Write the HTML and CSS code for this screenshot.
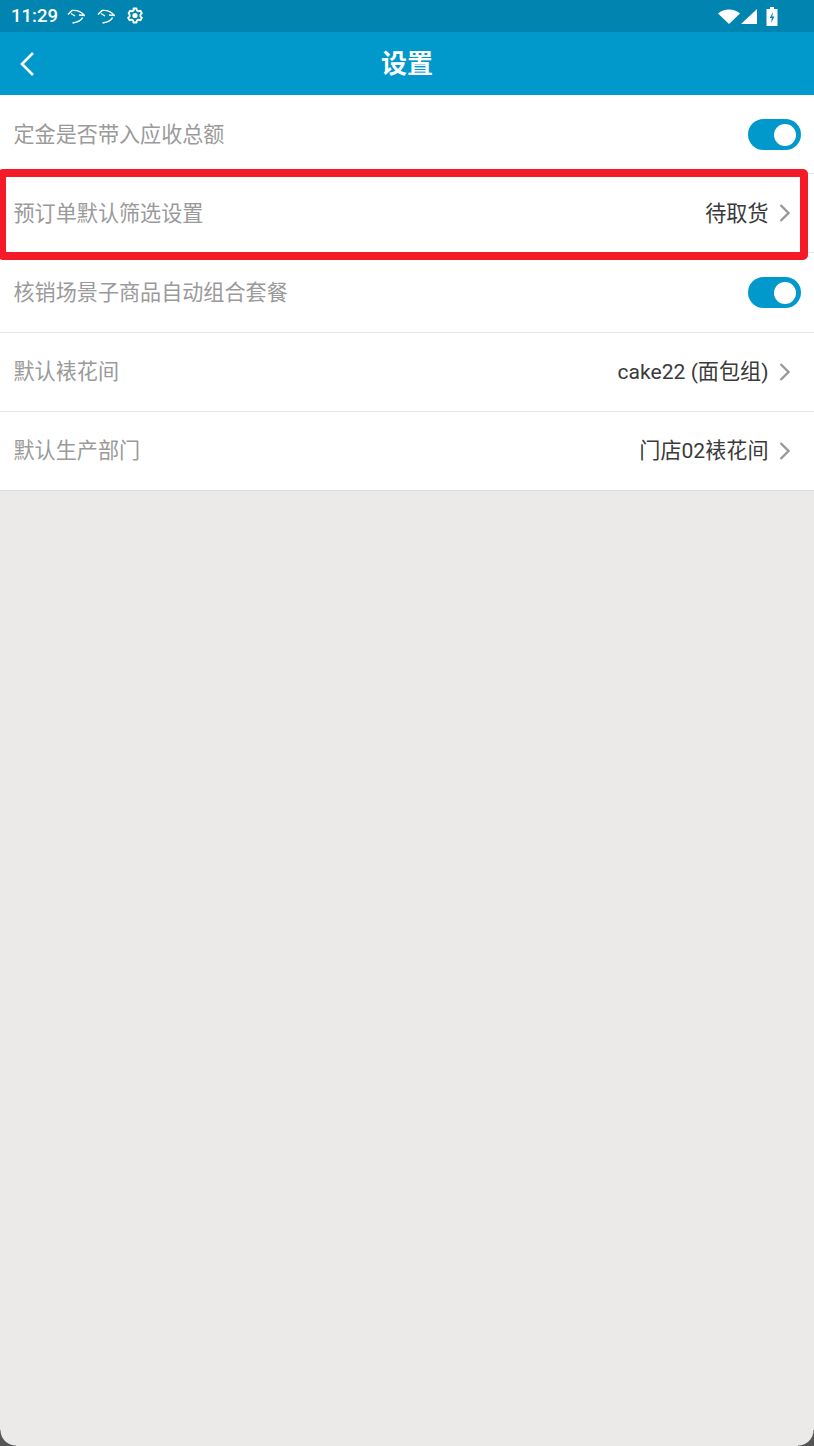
FILE: index.html
```html
<!DOCTYPE html>
<html lang="zh-CN">
<head>
    <meta charset="UTF-8">
    <meta name="viewport" content="width=device-width, initial-scale=1.0">
    <title>设置</title>
    <link rel="stylesheet" href="styles.css">
</head>
<body>

<div class="screen">
    <div class="status-bar">
        <span class="clock">11:29</span>
        <svg class="hook" width="18" height="15" viewBox="0 0 18 15"><path d="M1 5.500 5 1.500C9 1 14 2.500 17.500 6.500L12 6M4 4.500 8 7M15.500 8.500C14.500 11.500 11 13 5.500 14" fill="none" stroke="#fff" stroke-width="1.400"/></svg>
        <svg class="hook" width="18" height="15" viewBox="0 0 18 15"><path d="M1 5.500 5 1.500C9 1 14 2.500 17.500 6.500L12 6M4 4.500 8 7M15.500 8.500C14.500 11.500 11 13 5.500 14" fill="none" stroke="#fff" stroke-width="1.400"/></svg>
        <svg class="gear" width="18" height="18" viewBox="0 0 18 18"><path d="M7.500 1.500h3l.4 2 1.600.9 1.900-.7 1.500 2.600-1.500 1.300v1.800l1.500 1.300-1.500 2.600-1.900-.7-1.600.9-.4 2h-3l-.4-2-1.600-.9-1.900.7-1.500-2.600 1.500-1.300V7.600L2.600 6.300l1.500-2.600 1.900.7 1.600-.9z" fill="none" stroke="#fff" stroke-width="1.800" stroke-linejoin="round"/><circle cx="9" cy="8.500" r="2.600" fill="#fff"/></svg>
        <span class="status-right">
            <svg class="wifi" width="22" height="15" viewBox="0 0 22 15"><path d="M0 4.500C6-1 16-1 22 4.500L11 15z" fill="#fff"/></svg>
            <svg class="signal" width="16" height="15" viewBox="0 0 16 15"><path d="M16 0V15H0z" fill="#fff"/></svg>
            <svg width="12" height="19" viewBox="0 0 12 19"><path d="M4 0h4v2h3.500v17H.5V2H4z" fill="#fff"/><path d="M7 5 3.800 11h2l-.6 5 3.200-6.500H6.200z" fill="#0284b0"/></svg>
        </span>
    </div>

    <div class="nav-bar">
        <svg class="back" width="16" height="26" viewBox="0 0 16 26"><path d="M14 2 3 13l11 11" fill="none" stroke="#fff" stroke-width="2.600"/></svg>
        <h1>设置</h1>
    </div>

    <div class="list">
        <div class="row">
            <span class="label">定金是否带入应收总额</span>
            <span class="switch"></span>
        </div>
        <div class="row">
            <span class="label">预订单默认筛选设置</span>
            <span class="value">待取货</span>
            <svg class="arrow" width="14" height="20" viewBox="0 0 14 20"><path d="M2.500 2l8 8-8 8" fill="none" stroke="#999" stroke-width="2.400"/></svg>
        </div>
        <div class="row">
            <span class="label">核销场景子商品自动组合套餐</span>
            <span class="switch"></span>
        </div>
        <div class="row">
            <span class="label">默认裱花间</span>
            <span class="value">cake22 (面包组)</span>
            <svg class="arrow" width="14" height="20" viewBox="0 0 14 20"><path d="M2.500 2l8 8-8 8" fill="none" stroke="#999" stroke-width="2.400"/></svg>
        </div>
        <div class="row">
            <span class="label">默认生产部门</span>
            <span class="value">门店02裱花间</span>
            <svg class="arrow" width="14" height="20" viewBox="0 0 14 20"><path d="M2.500 2l8 8-8 8" fill="none" stroke="#999" stroke-width="2.400"/></svg>
        </div>
    </div>

    <div class="highlight"></div>
    <div class="corner corner-left"></div>
    <div class="corner corner-right"></div>
</div>

</body>
</html>
```

FILE: styles.css
```css
html, body {
    margin: 0;
    padding: 0;
}
body {
    font-family: Roboto, "Noto Sans CJK SC", sans-serif;
    background-color: #eaeaea;
}
.screen {
    position: relative;
    width: 814px;
    height: 1446px;
    overflow: hidden;
    background-color: #ebeae9;
}
.status-bar {
    display: flex;
    align-items: center;
    height: 32px;
    padding: 0 11px;
    box-sizing: border-box;
    background-color: #0284b0;
    color: #fff;
}
.clock {
    font-size: 18.500px;
    font-weight: 500;
    margin-right: 9px;
}
.hook {
    margin-right: 12px;
}
.hook + .gear {
    margin-left: -1px;
}
.status-right {
    display: flex;
    align-items: center;
    margin-left: auto;
    margin-right: 25px;
}
.wifi {
    margin-right: 1px;
}
.signal {
    margin-right: 9px;
}
.nav-bar {
    position: relative;
    display: flex;
    align-items: center;
    justify-content: center;
    height: 63px;
    padding-bottom: 4px;
    box-sizing: border-box;
    background-color: #0199cc;
}
.nav-bar h1 {
    margin: 0;
    font-size: 26px;
    font-weight: 700;
    color: #fff;
}
.back {
    position: absolute;
    left: 19px;
    top: 19px;
}
.list {
    background-color: #fff;
}
.row {
    display: flex;
    align-items: center;
    height: 79.200px;
    padding: 0 13px 0 13.500px;
    box-sizing: border-box;
    border-bottom: 1px solid #e4e4e4;
    font-size: 21.100px;
}
.row:last-child {
    border-bottom-color: #dcdcdc;
}
.label {
    color: #9a9a9a;
    margin: 0 auto 3px 0;
}
.value {
    color: #3a3a3a;
    margin-bottom: 3px;
}
.arrow {
    margin-left: 9px;
    margin-right: 9.500px;
}
.switch {
    position: relative;
    width: 53px;
    height: 31px;
    margin-top: 1px;
    border-radius: 16px;
    background-color: #0199cc;
}
.switch::after {
    content: "";
    position: absolute;
    right: 5px;
    top: 4.500px;
    width: 22px;
    height: 22px;
    border-radius: 50%;
    background-color: #fff;
}
.highlight {
    position: absolute;
    left: -2px;
    top: 169px;
    width: 810px;
    height: 91px;
    box-sizing: border-box;
    border: 8px solid #f41a27;
    border-radius: 5px;
}
.corner {
    position: absolute;
    bottom: 0;
    width: 16px;
    height: 16px;
    background: radial-gradient(circle at var(--cx) 0, transparent 15px, #555 16px);
}
.corner-left {
    left: 0;
    --cx: 100%;
}
.corner-right {
    right: 0;
    --cx: 0;
}
```
